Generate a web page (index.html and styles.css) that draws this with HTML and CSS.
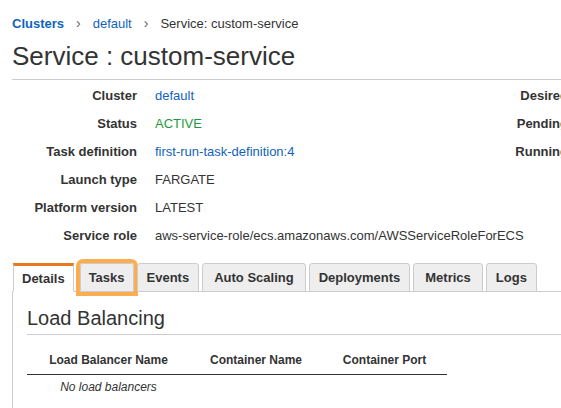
FILE: index.html
```html
<!DOCTYPE html>
<html lang="en">
<head>
    <meta charset="UTF-8">
    <meta name="viewport" content="width=device-width, initial-scale=1.0">
    <title>Service : custom-service</title>
    <link rel="stylesheet" href="styles.css">
</head>
<body>
    <div class="svc_wrap">
        <nav class="crumbs">
            <a href="#" class="crumb_root">Clusters</a>
            <span class="sep">&rsaquo;</span>
            <a href="#">default</a>
            <span class="sep">&rsaquo;</span>
            <span class="crumb_now">Service: custom-service</span>
        </nav>
        <h1 class="svc_title">Service : custom-service</h1>

        <div class="svc_info">
            <dl class="info_left">
                <dt>Cluster</dt><dd><a href="#">default</a></dd>
                <dt>Status</dt><dd class="ok">ACTIVE</dd>
                <dt>Task definition</dt><dd><a href="#">first-run-task-definition:4</a></dd>
                <dt>Launch type</dt><dd>FARGATE</dd>
                <dt>Platform version</dt><dd>LATEST</dd>
                <dt>Service role</dt><dd>aws-service-role/ecs.amazonaws.com/AWSServiceRoleForECS</dd>
            </dl>
            <dl class="info_right">
                <dt>Desired count</dt>
                <dt>Pending count</dt>
                <dt>Running count</dt>
            </dl>
        </div>

        <ul class="tabs">
            <li class="on">Details</li>
            <li class="mark">Tasks</li>
            <li>Events</li>
            <li class="wide">Auto Scaling</li>
            <li>Deployments</li>
            <li class="wide">Metrics</li>
            <li>Logs</li>
        </ul>

        <div class="tab_body">
            <h2>Load Balancing</h2>
            <table class="lb_table">
                <colgroup>
                    <col class="c_name">
                    <col class="c_cont">
                    <col class="c_port">
                </colgroup>
                <thead>
                    <tr>
                        <th>Load Balancer Name</th>
                        <th>Container Name</th>
                        <th>Container Port</th>
                    </tr>
                </thead>
                <tbody>
                    <tr>
                        <td class="empty">No load balancers</td>
                        <td></td>
                        <td></td>
                    </tr>
                </tbody>
            </table>
        </div>
    </div>
</body>
</html>
```

FILE: styles.css
```css
* {margin:0; padding:0; box-sizing:border-box; list-style:none;}
html, body {overflow:hidden;}
body {
    font-family:"Liberation Sans", Arial, sans-serif; font-size:13px;
    color:#333; background:#fff;
}
a {color:#0f63bd; text-decoration:none;}

.svc_wrap {padding:15px 0 0 12px; width:561px;}

/* breadcrumb */
.crumbs {display:flex; align-items:center; height:17px; line-height:17px;}
.crumbs .crumb_root {font-weight:bold;}
.crumbs .sep {color:#666; margin:0 12px; font-size:14px;}
.crumbs .crumb_now {color:#333;}

.svc_title {
    font-size:26px; font-weight:normal; color:#333; line-height:30px;
    margin-top:9px; padding-bottom:8px; border-bottom:1px solid #ccc;
}

/* info */
.svc_info {display:flex; padding-top:1px; width:620px;}
.info_left {
    display:grid; grid-template-columns:125px auto; column-gap:18px;
    grid-auto-rows:28px; align-items:center; width:483px;
}
.info_left dt {font-weight:bold; text-align:right; color:#333;}
.info_left dd {color:#333; white-space:nowrap;}
.info_left dd.ok {color:#1e9a3c;}
.info_right {width:112px; display:grid; grid-auto-rows:28px; align-items:center;}
.info_right dt {font-weight:bold; text-align:right; color:#333; white-space:nowrap;}

/* tabs */
.tabs {
    display:flex; gap:3px; margin-top:14px; padding-left:1px;
    border-bottom:1px solid #ccc; height:29px;
}
.tabs li {
    height:29px; line-height:27px; padding:0 9px; font-weight:bold; color:#333;
    background:#eee; border:1px solid #ccc; border-radius:3px 3px 0 0;
}
.tabs li.wide {padding:0 11px;}
.tabs li.on {
    background:#fff; border-top:3px solid #e9781e; border-bottom-color:#fff;
    line-height:25px; border-radius:0; padding:0 8px;
}
.tabs li.mark {outline:4px solid #fbad50; margin-left:3px; padding:0 8px;}

.tab_body {border-left:1px solid #ccc; padding:14px 0 0 14px; height:120px;}
.tab_body h2 {
    font-size:20px; font-weight:normal; color:#333; line-height:24px;
    padding-bottom:4px; border-bottom:1px solid #ccc;
}
.lb_table {border-collapse:collapse; margin-top:11px; font-size:12px; table-layout:fixed; width:420px;}
.lb_table .c_name {width:163px;}
.lb_table .c_cont {width:132px;}
.lb_table .c_port {width:125px;}
.lb_table th {
    height:28px; padding:0; font-weight:bold; color:#333; text-align:center;
    border-bottom:1px solid #333; white-space:nowrap;
}
.lb_table td {height:26px; text-align:center; color:#333;}
.lb_table td.empty {font-style:italic;}
```
